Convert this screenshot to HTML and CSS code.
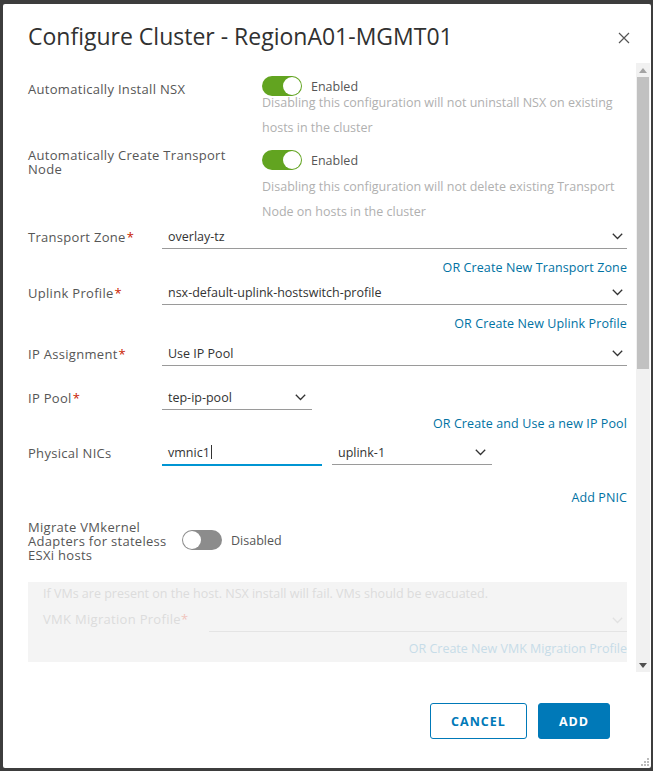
FILE: index.html
```html
<!DOCTYPE html>
<html>
<head>
<meta charset="utf-8">
<link rel="stylesheet" href="styles.css">
</head>
<body>
<div class="dialog">
  <div class="header">
    <h1 class="title">Configure Cluster - RegionA01-MGMT01</h1>
    <svg class="close" width="12" height="12" viewBox="0 0 12 12"><path d="M1 1L11 11M11 1L1 11" stroke="#555" stroke-width="1.2" fill="none"/></svg>
  </div>
  <div class="body">
    <div class="content">
      <div class="trow trow1">
        <div class="tlabel">Automatically Install NSX</div>
        <div class="tctrl">
          <div class="toggle-line"><span class="toggle on"></span><span class="tstate">Enabled</span></div>
          <div class="help help1">Disabling this configuration will not uninstall NSX on existing hosts in the cluster</div>
        </div>
      </div>
      <div class="trow trow2">
        <div class="tlabel tlabel2">Automatically Create Transport Node</div>
        <div class="tctrl">
          <div class="toggle-line"><span class="toggle on"></span><span class="tstate">Enabled</span></div>
          <div class="help help2">Disabling this configuration will not delete existing Transport Node on hosts in the cluster</div>
        </div>
      </div>

      <div class="frow m-tz">
        <div class="flabel">Transport Zone<span class="req">*</span></div>
        <div class="select full"><span>overlay-tz</span><svg class="chev" width="11" height="7" viewBox="0 0 11 7"><path d="M0.8 0.8L5.5 5.5L10.2 0.8" stroke="#333" stroke-width="1.3" fill="none"/></svg></div>
      </div>
      <div class="link m-l1">OR Create New Transport Zone</div>

      <div class="frow m-up">
        <div class="flabel">Uplink Profile<span class="req">*</span></div>
        <div class="select full"><span>nsx-default-uplink-hostswitch-profile</span><svg class="chev" width="11" height="7" viewBox="0 0 11 7"><path d="M0.8 0.8L5.5 5.5L10.2 0.8" stroke="#333" stroke-width="1.3" fill="none"/></svg></div>
      </div>
      <div class="link m-l2">OR Create New Uplink Profile</div>

      <div class="frow m-ip">
        <div class="flabel">IP Assignment<span class="req">*</span></div>
        <div class="select full"><span>Use IP Pool</span><svg class="chev" width="11" height="7" viewBox="0 0 11 7"><path d="M0.8 0.8L5.5 5.5L10.2 0.8" stroke="#333" stroke-width="1.3" fill="none"/></svg></div>
      </div>

      <div class="frow m-pool">
        <div class="flabel">IP Pool<span class="req">*</span></div>
        <div class="select pool"><span>tep-ip-pool</span><svg class="chev" width="11" height="7" viewBox="0 0 11 7"><path d="M0.8 0.8L5.5 5.5L10.2 0.8" stroke="#333" stroke-width="1.3" fill="none"/></svg></div>
      </div>
      <div class="link m-l3">OR Create and Use a new IP Pool</div>

      <div class="frow m-nic">
        <div class="flabel">Physical NICs</div>
        <div class="nics">
          <div class="input active"><span>vmnic1</span><span class="caret"></span></div>
          <div class="select uplink"><span>uplink-1</span><svg class="chev" width="11" height="7" viewBox="0 0 11 7"><path d="M0.8 0.8L5.5 5.5L10.2 0.8" stroke="#333" stroke-width="1.3" fill="none"/></svg></div>
        </div>
      </div>
      <div class="link m-l4">Add PNIC</div>

      <div class="mrow">
        <div class="mlabel">Migrate VMkernel Adapters for stateless ESXi hosts</div>
        <div class="toggle-line"><span class="toggle off"></span><span class="tstate">Disabled</span></div>
      </div>

      <div class="disabled-box">
        <div class="dnote">If VMs are present on the host. NSX install will fail. VMs should be evacuated.</div>
        <div class="drow">
          <div class="dlabel">VMK Migration Profile<span class="dreq">*</span></div>
          <div class="dselect"><svg class="chev" width="11" height="7" viewBox="0 0 11 7"><path d="M0.8 0.8L5.5 5.5L10.2 0.8" stroke="#e2e2e2" stroke-width="1.3" fill="none"/></svg></div>
        </div>
        <div class="dlink">OR Create New VMK Migration Profile</div>
      </div>
    </div>
    <div class="scrollbar">
      <div class="sb-btn"><svg width="8" height="5" viewBox="0 0 8 5"><path d="M0 5L4 0L8 5Z" fill="#a3a3a3"/></svg></div>
      <div class="sb-track"><div class="sb-thumb"></div></div>
      <div class="sb-btn"><svg width="8" height="5" viewBox="0 0 8 5"><path d="M0 0L8 0L4 5Z" fill="#505050"/></svg></div>
    </div>
  </div>
  <div class="footer">
    <button class="btn btn-outline">CANCEL</button>
    <button class="btn btn-primary">ADD</button>
  </div>
  <svg class="grip" width="9" height="9" viewBox="0 0 9 9">
    <rect x="6" y="0" width="2" height="2" fill="#bbb"/>
    <rect x="3" y="3" width="2" height="2" fill="#bbb"/><rect x="6" y="3" width="2" height="2" fill="#bbb"/>
    <rect x="0" y="6" width="2" height="2" fill="#bbb"/><rect x="3" y="6" width="2" height="2" fill="#bbb"/><rect x="6" y="6" width="2" height="2" fill="#bbb"/>
  </svg>
</div>
</body>
</html>
```

FILE: styles.css
```css
* { box-sizing: border-box; }
html, body { margin: 0; padding: 0; }
body {
  background: #3d3d3d;
  padding: 4px 2px 3px 3px;
  width: 653px;
  height: 771px;
  font-family: "Open Sans", Lato, sans-serif;
  color: #565656;
}
.dialog {
  position: relative;
  background: #fff;
  width: 648px;
  height: 764px;
  border-radius: 2px;
  display: flex;
  flex-direction: column;
}
.header {
  height: 59px;
  display: flex;
  align-items: center;
  justify-content: space-between;
  padding: 0 21px 0 25px;
}
.title {
  margin: 0;
  font-size: 23px;
  font-weight: 400;
  color: #313131;
  padding-top: 5px;
}
.close { margin-top: 8px; }
.body {
  display: flex;
  height: 609px;
}
.content {
  flex: 1;
  overflow: hidden;
  padding: 13px 9px 0 25px;
  font-size: 12.5px;
}
.scrollbar {
  width: 14px;
  margin-right: 1px;
  background: #f1f1f1;
  display: flex;
  flex-direction: column;
}
.sb-btn {
  height: 14px;
  display: flex;
  align-items: center;
  justify-content: center;
}
.sb-track { flex: 1; padding: 0 1px; }
.sb-thumb {
  height: 292px;
  background: #c1c1c1;
}

/* labels share a slightly wider face */
.tlabel, .flabel, .mlabel {
  font-size: 13px;
  letter-spacing: 0.3px;
  color: #565656;
}

/* toggle rows */
.trow { display: grid; }
.trow1 { grid-template-columns: 234px 1fr; }
.trow2 { grid-template-columns: 234px 1fr; margin-top: 10px; }
.tlabel { padding-top: 5px; line-height: 16px; }
.tlabel2 { margin-top: -2px; padding-top: 0; line-height: 14px; width: 205px; }
.toggle-line { display: flex; align-items: center; height: 20px; gap: 9px; }
.toggle {
  position: relative;
  width: 40px;
  height: 20px;
  border-radius: 10px;
  flex: none;
}
.toggle::after {
  content: "";
  position: absolute;
  top: 1px;
  width: 18px;
  height: 18px;
  border-radius: 50%;
  background: #fff;
}
.toggle.on { background: #62a420; }
.toggle.on::after { right: 1px; }
.toggle.off { background: #8c8c8c; }
.toggle.off::after { left: 1px; }
.tstate { font-size: 12.5px; color: #565656; }
.help {
  font-size: 12.5px;
  color: #b0b0b0;
  line-height: 25px;
  padding-right: 2px;
}
.help1 { margin-top: -6px; }
.help2 { margin-top: 4px; }

/* form rows */
.frow {
  display: grid;
  grid-template-columns: 134px 1fr;
  align-items: center;
}
.req { color: #c92100; margin-left: 1px; }
.select, .input {
  height: 25px;
  border-bottom: 1px solid #9a9a9a;
  display: flex;
  align-items: center;
  justify-content: space-between;
  padding: 0 4px 0 6px;
  color: #333;
}
.pool { width: 150px; padding-right: 6px; }
.nics { display: flex; gap: 10px; }
.input { width: 160px; justify-content: flex-start; }
.input.active { border-bottom: 2px solid #0095d3; height: 26px; }
.caret { display: inline-block; width: 1px; height: 14px; background: #333; margin-left: 1px; }
.uplink { width: 160px; padding-right: 6px; }
.link {
  text-align: right;
  color: #0072a3;
  line-height: 18px;
  letter-spacing: 0.1px;
}
.m-tz { margin-top: 0; }
.m-l1 { margin-top: 10px; }
.m-up { margin-top: 3px; }
.m-l2 { margin-top: 10px; }
.m-ip { margin-top: 8px; }
.m-pool { margin-top: 19px; }
.m-l3 { margin-top: 5px; }
.m-nic { margin-top: 7px; }
.m-l4 { margin-top: 23px; }

.mrow {
  margin-top: 13px;
  display: flex;
  align-items: center;
}
.mlabel { width: 154px; line-height: 14px; }
.mrow .toggle-line { margin-top: -2px; }

.disabled-box {
  margin-top: 20px;
  height: 80px;
  background: #f4f4f4;
  padding: 4px 0 0 15px;
  overflow: hidden;
  color: #dcdcdc;
}
.dnote { line-height: 16px; font-size: 12.5px; }
.drow {
  margin-top: 8px;
  display: grid;
  grid-template-columns: 166px 1fr;
  align-items: end;
}
.dlabel { line-height: 18px; padding-bottom: 4px; font-size: 13px; letter-spacing: 0.3px; }
.dreq { color: #f0c4bd; }
.dselect {
  height: 22px;
  border-bottom: 1px solid #e4e4e4;
  display: flex;
  justify-content: flex-end;
  align-items: center;
  padding-right: 4px;
}
.dlink { text-align: right; color: #c7dce8; margin-top: 8px; line-height: 18px; }

.footer {
  flex: 1;
  display: flex;
  justify-content: flex-end;
  align-items: flex-start;
  gap: 11px;
  padding: 31px 41px 0 0;
}
.btn {
  height: 36px;
  border-radius: 3px;
  font-family: "Open Sans", Lato, sans-serif;
  font-weight: 700;
  font-size: 12.5px;
  letter-spacing: 1px;
  padding: 0;
}
.btn-outline {
  width: 97px;
  background: #fff;
  border: 1px solid #0079b8;
  color: #0079b8;
}
.btn-primary {
  width: 72px;
  background: #0079b8;
  border: 1px solid #0079b8;
  color: #fff;
}
.grip { position: absolute; right: 1px; bottom: 1px; }
```
